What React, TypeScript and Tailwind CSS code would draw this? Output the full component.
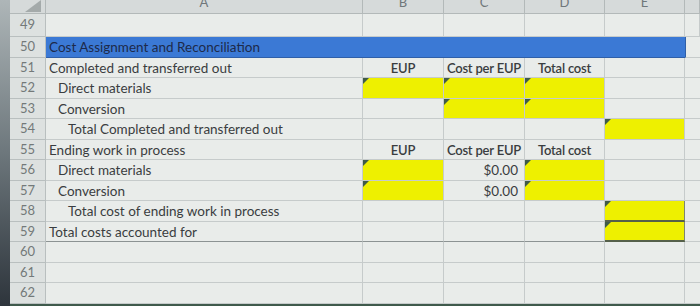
import React from 'react';

type Cell = {
  text?: string;
  align?: 'left' | 'center' | 'right';
  bold?: boolean;
  yellow?: boolean;
  boxed?: boolean;
};

type Row = {
  num: number;
  label?: string;
  indent?: 0 | 1 | 2;
  blue?: boolean;
  heavyBottom?: boolean;
  cells?: Record<string, Cell>;
};

const head = (): Record<string, Cell> => ({
  B: { text: 'EUP', align: 'center', bold: true },
  C: { text: 'Cost per EUP', align: 'center', bold: true },
  D: { text: 'Total cost', align: 'center', bold: true },
});

const rows: Row[] = [
  { num: 50, label: 'Cost Assignment and Reconciliation', blue: true },
  { num: 51, label: 'Completed and transferred out', cells: head() },
  { num: 52, label: 'Direct materials', indent: 1, cells: { B: { yellow: true }, C: { yellow: true }, D: { yellow: true } } },
  { num: 53, label: 'Conversion', indent: 1, cells: { C: { yellow: true }, D: { yellow: true } } },
  { num: 54, label: 'Total Completed and transferred out', indent: 2, cells: { E: { yellow: true } } },
  { num: 55, label: 'Ending work in process', cells: head() },
  { num: 56, label: 'Direct materials', indent: 1, cells: { B: { yellow: true }, C: { text: '$0.00', align: 'right' }, D: { yellow: true } } },
  { num: 57, label: 'Conversion', indent: 1, cells: { B: { yellow: true }, C: { text: '$0.00', align: 'right' }, D: { yellow: true } } },
  { num: 58, label: 'Total cost of ending work in process', indent: 2, cells: { E: { yellow: true, boxed: true } } },
  { num: 59, label: 'Total costs accounted for', heavyBottom: true, cells: { E: { yellow: true, boxed: true } } },
  { num: 60 },
  { num: 61 },
  { num: 62 },
];

const cols = 'grid grid-cols-[36px_317px_81px_81px_80px_80px_15px]';
const font = { fontFamily: 'Lato, "Open Sans", sans-serif' };

function Marker() {
  return (
    <svg className="absolute left-0 top-0" width="6" height="6" viewBox="0 0 6 6">
      <polygon points="0,0 6,0 0,6" fill="#3f5b49" />
    </svg>
  );
}

function DataCell({ cell, blue, heavy }: { cell?: Cell; blue?: boolean; heavy?: boolean }) {
  const bg = blue ? 'bg-[#3b79d5]' : cell?.yellow ? 'bg-[#eef000]' : '';
  const border = blue
    ? 'border-b border-[#2f5fa8]'
    : cell?.boxed
    ? 'border-b-2 border-r border-b-[#55604a] border-r-[#7d8570]'
    : `border-r border-b border-[#c6cbcb] ${heavy ? 'border-b-[#8c9393]' : ''}`;
  const just =
    cell?.align === 'center' ? 'justify-center' : cell?.align === 'right' ? 'justify-end pr-[6px]' : 'justify-start';
  return (
    <div className={`relative flex items-center pt-[2px] ${just} ${bg} ${border}`}>
      {cell?.yellow && <Marker />}
      {cell?.text && (
        <span
          className={`leading-none whitespace-nowrap text-[#3a3d40] ${
            cell.bold ? 'text-[13px] font-semibold tracking-[-0.2px]' : 'text-[13.5px]'
          }`}
        >
          {cell.text}
        </span>
      )}
    </div>
  );
}

function SheetRow({ row }: { row: Row }) {
  const pad = row.indent === 2 ? 'pl-[22px]' : row.indent === 1 ? 'pl-[12px]' : 'pl-[3px]';
  const bottom = row.heavyBottom ? 'border-b-[#8c9393]' : 'border-b-[#c6cbcb]';
  return (
    <div className={`${cols} h-[20.5px]`}>
      <div className="flex items-center justify-center border-r border-b border-[#b9bfbf] bg-[#dde1e0] text-[13px] text-[#737979]">
        {row.num}
      </div>
      <div
        className={`flex items-center pt-[2px] ${pad} border-b ${
          row.blue ? 'bg-[#3b79d5] border-[#2f5fa8]' : `border-r border-[#c6cbcb] ${bottom}`
        }`}
      >
        {row.label && (
          <span
            className={`text-[13.5px] leading-none whitespace-nowrap ${row.blue ? 'text-[#1d2a4a]' : 'text-[#3a3d40]'}`}
          >
            {row.label}
          </span>
        )}
      </div>
      {['B', 'C', 'D', 'E'].map((k) => (
        <DataCell key={k} cell={row.cells?.[k]} blue={row.blue} heavy={row.heavyBottom} />
      ))}
      <div className={`border-b ${row.blue ? 'border-[#c6cbcb] border-l border-l-[#2f5fa8]' : 'border-[#c6cbcb]'}`} />
    </div>
  );
}

export default function App() {
  return (
    <div className="w-[700px] h-[306px] overflow-hidden flex bg-[#e9ecea]" style={font}>
      {/* bezel */}
      <div className="w-[10px] h-full bg-linear-to-b from-[#aeb6b8] via-[#6d777c] to-[#2e353c]" />
      <div className="flex-1 flex flex-col">
        {/* column header */}
        <div className={`${cols} h-[14px] bg-[#d6dada]`}>
          <div className="relative border-r border-b border-[#b3b9b9] overflow-hidden">
            <svg className="absolute right-[4px] top-0" width="16" height="12" viewBox="0 0 16 12">
              <polygon points="16,0 16,12 0,12" fill="#a4aaaa" />
            </svg>
          </div>
          {['A', 'B', 'C', 'D', 'E', ''].map((l, i) => (
            <div
              key={i}
              className="flex justify-center overflow-hidden border-r border-b border-[#b3b9b9] text-[13px] leading-none text-[#70777a]"
            >
              <span className="-mt-[4px]">{l}</span>
            </div>
          ))}
        </div>
        {/* row 49 */}
        <div className={`${cols} h-[23px]`}>
          <div className="flex items-center justify-center border-r border-b border-[#b9bfbf] bg-[#dde1e0] text-[13px] text-[#737979]">
            49
          </div>
          {[0, 1, 2, 3, 4, 5].map((i) => (
            <div key={i} className="border-r border-b border-[#c6cbcb]" />
          ))}
        </div>
        {rows.map((r) => (
          <SheetRow key={r.num} row={r} />
        ))}
        <div className="flex-1 bg-[#3f5a4c]" />
      </div>
    </div>
  );
}
